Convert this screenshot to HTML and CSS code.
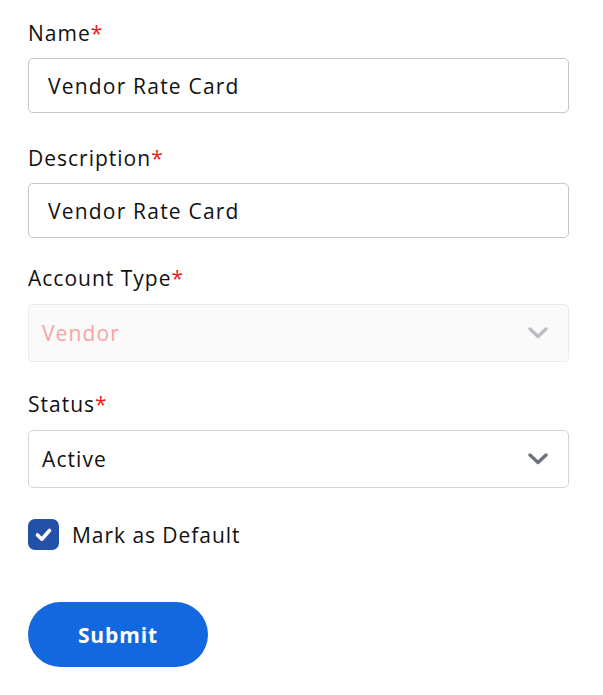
FILE: index.html
```html
<!DOCTYPE html>
<html lang="en">
<head>
<meta charset="utf-8">
<title>Rate Card Form</title>
<link rel="stylesheet" href="styles.css">
</head>
<body>
<form class="form">
  <div class="field field-name">
    <label class="label">Name<span class="req">*</span></label>
    <div class="input">Vendor Rate Card</div>
  </div>
  <div class="field field-desc">
    <label class="label">Description<span class="req">*</span></label>
    <div class="input">Vendor Rate Card</div>
  </div>
  <div class="field field-type">
    <label class="label label-select">Account Type<span class="req">*</span></label>
    <div class="select select-disabled">
      <span class="select-text">Vendor</span>
      <svg class="chevron" width="20" height="12" viewBox="0 0 20 12"><polyline points="2,2 10,9.5 18,2" fill="none" stroke="currentColor" stroke-width="3.4" stroke-linecap="round" stroke-linejoin="round"/></svg>
    </div>
  </div>
  <div class="field field-status">
    <label class="label label-select">Status<span class="req">*</span></label>
    <div class="select">
      <span class="select-text">Active</span>
      <svg class="chevron" width="20" height="12" viewBox="0 0 20 12"><polyline points="2,2 10,9.5 18,2" fill="none" stroke="currentColor" stroke-width="3.4" stroke-linecap="round" stroke-linejoin="round"/></svg>
    </div>
  </div>
  <div class="check-row">
    <span class="checkbox">
      <svg width="31" height="31" viewBox="0 0 31 31"><polyline points="9.5,16 13.8,20.2 21.5,11.5" fill="none" stroke="#fff" stroke-width="3.6" stroke-linecap="round" stroke-linejoin="round"/></svg>
    </span>
    <span class="check-label">Mark as Default</span>
  </div>
  <button type="button" class="submit">Submit</button>
</form>
</body>
</html>
```

FILE: styles.css
```css
* { box-sizing: border-box; }

body {
  margin: 0;
  background: #ffffff;
  font-family: "Open Sans", "Liberation Sans", sans-serif;
  color: #111111;
}

.form {
  display: flex;
  flex-direction: column;
  align-items: flex-start;
  width: 569px;
  padding: 18px 0 0 28px;
}

.field {
  display: flex;
  flex-direction: column;
  width: 541px;
}

.field-desc { margin-top: 30px; }
.field-type { margin-top: 25px; }
.field-status { margin-top: 27px; }

.label {
  font-size: 21px;
  line-height: 30px;
  letter-spacing: 1px;
  color: #111111;
  margin-bottom: 10px;
}

.label-select { margin-bottom: 11px; }

.req {
  color: #ee1c1c;
  letter-spacing: 0;
}

.input {
  height: 55px;
  border: 1px solid #c6c6c6;
  border-radius: 5px;
  padding: 0 19px;
  display: flex;
  align-items: center;
  font-size: 21px;
  letter-spacing: 1.2px;
  color: #111111;
}

.select {
  height: 58px;
  border: 1px solid #d4d5da;
  border-radius: 5px;
  padding: 0 20px 0 13px;
  display: flex;
  align-items: center;
  justify-content: space-between;
  font-size: 21px;
  letter-spacing: 1.1px;
  color: #111111;
}

.select .chevron { color: #6b7280; }

.select-disabled {
  background: #fafafa;
  border-color: #ebebeb;
  color: #f6a4a4;
}

.select-disabled .chevron { color: #babdc4; }

.check-row {
  display: flex;
  align-items: center;
  gap: 13px;
  margin-top: 31px;
}

.checkbox {
  width: 31px;
  height: 31px;
  border-radius: 7px;
  background: #2451a8;
  display: flex;
}

.check-label {
  font-size: 21px;
  letter-spacing: 0.95px;
  color: #111111;
}

.submit {
  margin-top: 52px;
  width: 180px;
  height: 65px;
  border: none;
  border-radius: 33px;
  background: #1367df;
  color: #ffffff;
  font-family: "Open Sans", "Liberation Sans", sans-serif;
  font-size: 21px;
  font-weight: 700;
  letter-spacing: 0.9px;
}
```
